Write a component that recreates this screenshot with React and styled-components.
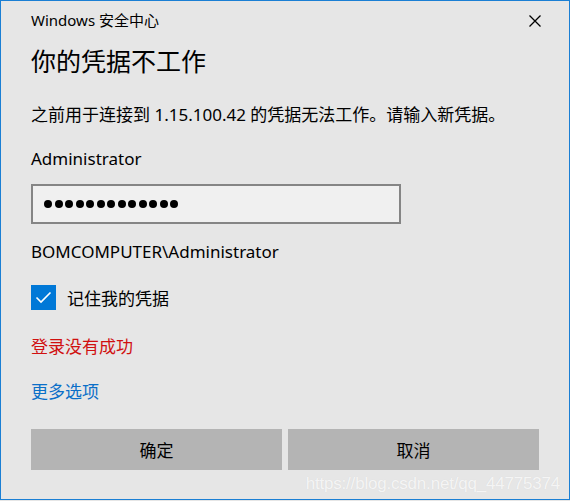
import styled, { createGlobalStyle } from 'styled-components';

const GlobalStyle = createGlobalStyle`
  html, body {
    margin: 0;
    padding: 0;
    background: #e6e6e6;
  }
  * {
    box-sizing: border-box;
  }
`;

const Window = styled.div`
  position: relative;
  width: 570px;
  height: 500px;
  border: 1px solid #1a7fd4;
  background: #e6e6e6;
  display: flex;
  flex-direction: column;
  padding: 0 30px;
  font-family: "Noto Sans", "Noto Sans CJK SC", sans-serif;
  color: #000;
`;

const TitleBar = styled.div`
  height: 38px;
  display: flex;
  align-items: center;
  justify-content: space-between;
`;

const Title = styled.div`
  font-size: 15px;
  line-height: 20px;
`;

const Close = styled.div`
  width: 12px;
  height: 12px;
  margin-right: -2px;
  margin-top: 2px;
  display: flex;
`;

const Heading = styled.h1`
  margin: 5px 0 0;
  font-size: 25px;
  font-weight: 400;
  line-height: 34px;
`;

const Text = styled.div`
  font-size: 17px;
  line-height: 24px;
  margin-top: ${(p) => p.$top}px;
  color: ${(p) => p.$color || '#000'};
  cursor: ${(p) => (p.$link ? 'pointer' : 'default')};
`;

const Field = styled.div`
  margin-top: 13px;
  width: 370px;
  height: 40px;
  border: 2px solid #858585;
  background: #f0f0f0;
  display: flex;
  align-items: center;
  padding-left: 11px;
  gap: 2.5px;
`;

const Dot = styled.span`
  width: 8px;
  height: 8px;
  border-radius: 50%;
  background: #000;
`;

const CheckRow = styled.label`
  margin-top: 21px;
  display: flex;
  align-items: center;
  gap: 11px;
  height: 25px;
  font-size: 17px;
`;

const Box = styled.span`
  width: 25px;
  height: 25px;
  background: #0078d7;
  display: flex;
  align-items: center;
  justify-content: center;
`;

const Buttons = styled.div`
  margin-top: 25px;
  display: grid;
  grid-template-columns: 251px 251px;
  gap: 6px;
`;

const Button = styled.button`
  height: 41px;
  border: none;
  background: #b4b4b4;
  font-family: inherit;
  font-size: 17px;
  color: #000;
  padding: 0;
`;

const Watermark = styled.div`
  position: absolute;
  right: 9px;
  bottom: 5px;
  font-family: "Liberation Sans", Arial, sans-serif;
  font-size: 17px;
  color: rgba(255, 255, 255, 0.75);
  text-shadow: 0 0 1px rgba(0, 0, 0, 0.08);
  letter-spacing: -0.2px;
`;

export default function App() {
  return (
    <>
      <GlobalStyle />
      <Window>
        <TitleBar>
          <Title>Windows 安全中心</Title>
          <Close>
            <svg width="12" height="12" viewBox="0 0 12 12">
              <path d="M0.5 0.5 L11.5 11.5 M11.5 0.5 L0.5 11.5" stroke="#000" strokeWidth="1.3" fill="none" />
            </svg>
          </Close>
        </TitleBar>
        <Heading>你的凭据不工作</Heading>
        <Text $top={25}>之前用于连接到 1.15.100.42 的凭据无法工作。请输入新凭据。</Text>
        <Text $top={20}>Administrator</Text>
        <Field>
          {Array.from({ length: 13 }).map((_, i) => (
            <Dot key={i} />
          ))}
        </Field>
        <Text $top={16}>BOMCOMPUTER\Administrator</Text>
        <CheckRow>
          <Box>
            <svg width="25" height="25" viewBox="0 0 25 25">
              <path d="M5.5 12.5 L10 17 L19.5 7.5" stroke="#fff" strokeWidth="1.6" fill="none" />
            </svg>
          </Box>
          记住我的凭据
        </CheckRow>
        <Text $top={25} $color="#d01010">登录没有成功</Text>
        <Text $top={21} $color="#0a6fc8" $link>更多选项</Text>
        <Buttons>
          <Button>确定</Button>
          <Button>取消</Button>
        </Buttons>
        <Watermark>https://blog.csdn.net/qq_44775374</Watermark>
      </Window>
    </>
  );
}
